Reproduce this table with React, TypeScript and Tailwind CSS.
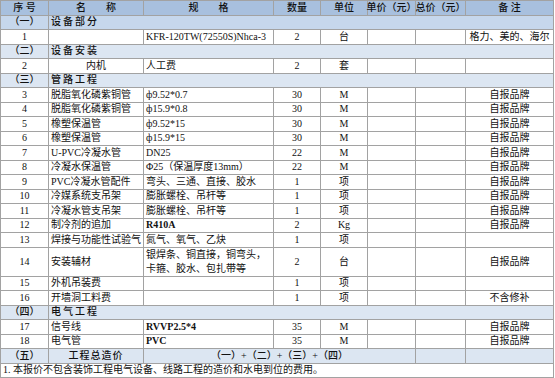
import type { ReactNode } from 'react';

type Item = {
  kind: 'item';
  no: string;
  name?: string;
  spec?: ReactNode;
  qty: string;
  unit: string;
  note?: string;
  nameCenter?: boolean;
  specBold?: boolean;
  tall?: boolean;
};

type Section = {
  kind: 'section';
  no: string;
  title: string;
  dark?: boolean;
};

type Row = Item | Section;

const rows: Row[] = [
  { kind: 'section', no: '（一）', title: '设备部分', dark: true },
  { kind: 'item', no: '1', spec: 'KFR-120TW(72550S)Nhca-3', qty: '2', unit: '台', note: '格力、美的、海尔' },
  { kind: 'section', no: '（二）', title: '设备安装' },
  { kind: 'item', no: '2', name: '内机', nameCenter: true, spec: '人工费', qty: '2', unit: '套' },
  { kind: 'section', no: '（三）', title: '管路工程' },
  { kind: 'item', no: '3', name: '脱脂氧化磷紫铜管', spec: 'ф9.52*0.7', qty: '30', unit: 'M', note: '自报品牌' },
  { kind: 'item', no: '4', name: '脱脂氧化磷紫铜管', spec: 'ф15.9*0.8', qty: '30', unit: 'M', note: '自报品牌' },
  { kind: 'item', no: '5', name: '橡塑保温管', spec: 'ф9.52*15', qty: '30', unit: 'M', note: '自报品牌' },
  { kind: 'item', no: '6', name: '橡塑保温管', spec: 'ф15.9*15', qty: '30', unit: 'M', note: '自报品牌' },
  { kind: 'item', no: '7', name: 'U-PVC冷凝水管', spec: 'DN25', qty: '22', unit: 'M', note: '自报品牌' },
  { kind: 'item', no: '8', name: '冷凝水保温管', spec: 'Φ25（保温厚度13mm）', qty: '22', unit: 'M', note: '自报品牌' },
  { kind: 'item', no: '9', name: 'PVC冷凝水管配件', spec: '弯头、三通、直接、胶水', qty: '1', unit: '项', note: '自报品牌' },
  { kind: 'item', no: '10', name: '冷媒系统支吊架', spec: '膨胀螺栓、吊杆等', qty: '1', unit: '项', note: '自报品牌' },
  { kind: 'item', no: '11', name: '冷凝水管支吊架', spec: '膨胀螺栓、吊杆等', qty: '1', unit: '项', note: '自报品牌' },
  { kind: 'item', no: '12', name: '制冷剂的追加', spec: 'R410A', specBold: true, qty: '2', unit: 'Kg', note: '自报品牌' },
  { kind: 'item', no: '13', name: '焊接与功能性试验气', spec: '氮气、氧气、乙炔', qty: '1', unit: '项' },
  {
    kind: 'item',
    no: '14',
    name: '安装辅材',
    spec: (
      <>
        银焊条、铜直接，铜弯头，
        <br />
        卡箍、胶水、包扎带等
      </>
    ),
    qty: '2',
    unit: '台',
    note: '自报品牌',
    tall: true,
  },
  { kind: 'item', no: '15', name: '外机吊装费', qty: '1', unit: '项' },
  { kind: 'item', no: '16', name: '开墙洞工料费', qty: '1', unit: '项', note: '不含修补' },
  { kind: 'section', no: '（四）', title: '电气工程' },
  { kind: 'item', no: '17', name: '信号线', spec: 'RVVP2.5*4', specBold: true, qty: '35', unit: 'M', note: '自报品牌' },
  { kind: 'item', no: '18', name: '电气管', spec: 'PVC', specBold: true, qty: '35', unit: 'M', note: '自报品牌' },
];

const headers = ['序 号', '名　　称', '规　　格', '数量', '单位', '单价（元）', '总价（元）', '备 注'];

function Cell({ children, className = '' }: { children?: ReactNode; className?: string }) {
  return <div className={`flex items-center whitespace-nowrap px-[2px] ${className}`}>{children}</div>;
}

function ItemRow({ row }: { row: Item }) {
  const span = row.tall ? 'row-span-2' : '';
  const bg = `bg-white ${span}`;

  return (
    <>
      <Cell className={`${bg} justify-center`}>{row.no}</Cell>
      <Cell className={`${bg} ${row.nameCenter ? 'justify-center' : ''}`}>{row.name}</Cell>
      <Cell className={`${bg} ${row.specBold ? 'font-bold' : ''} ${row.tall ? 'whitespace-normal leading-[14px]' : ''}`}>
        {row.spec}
      </Cell>
      <Cell className={`${bg} justify-center`}>{row.qty}</Cell>
      <Cell className={`${bg} justify-center`}>{row.unit}</Cell>
      <Cell className={bg} />
      <Cell className={bg} />
      <Cell className={`${bg} justify-center`}>{row.note}</Cell>
    </>
  );
}

function SectionRow({ row }: { row: Section }) {
  const bg = row.dark ? 'bg-[#c6d7ec]' : 'bg-[#dce6f2]';

  return (
    <>
      <Cell className={`${bg} justify-center font-medium`}>{row.no}</Cell>
      <Cell className={`${bg} col-span-7 font-medium tracking-[2px]`}>{row.title}</Cell>
    </>
  );
}

export default function App() {
  return (
    <div
      className="bg-white w-[555px] h-[378px] text-[10px] leading-none text-[#111]"
      style={{ fontFamily: '"Liberation Serif", "Noto Sans CJK SC", serif' }}
    >
      <div className="grid w-[554px] grid-cols-[47px_94px_129px_46px_46px_47px_49px_87px] auto-rows-[13.5px] gap-px border border-[#a2a2a2] bg-[#a2a2a2]">
        {headers.map((h) => (
          <Cell key={h} className="bg-[#a8c0de] justify-center font-medium">
            {h}
          </Cell>
        ))}

        {rows.map((row, i) =>
          row.kind === 'section' ? <SectionRow key={i} row={row} /> : <ItemRow key={i} row={row} />
        )}

        <Cell className="bg-[#dce6f2] justify-center font-medium">（五）</Cell>
        <Cell className="bg-[#dce6f2] justify-center font-medium tracking-[1px]">工程总造价</Cell>
        <Cell className="bg-[#dce6f2] col-span-4 justify-center font-medium">（一）+（二）+（三）+（四）</Cell>
        <Cell className="bg-[#dce6f2]" />
        <Cell className="bg-[#dce6f2]" />

        <Cell className="bg-white col-span-8">1. 本报价不包含装饰工程电气设备、线路工程的造价和水电到位的费用。</Cell>
      </div>
    </div>
  );
}
